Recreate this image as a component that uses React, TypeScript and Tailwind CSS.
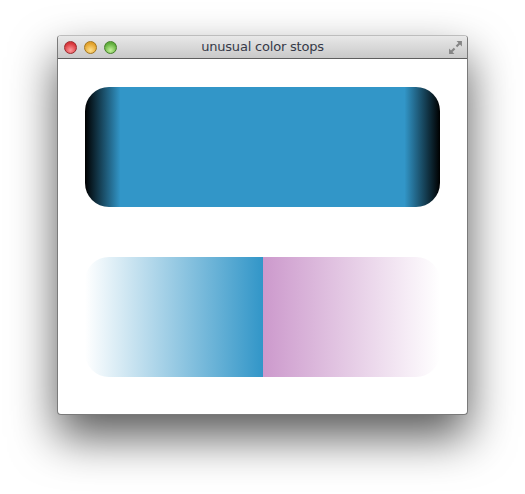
import React from 'react';

const TrafficLight = ({ from, to, ring }: { from: string; to: string; ring: string }) => (
  <span
    className={`block h-[13px] w-[13px] rounded-full border ${ring}`}
    style={{ background: `radial-gradient(circle at 50% 75%, ${to} 0%, ${from} 70%)` }}
  />
);

const ResizeIcon = () => (
  <svg width="15" height="15" viewBox="0 0 14 14" fill="#858585">
    <path d="M8 1 H13 V6 L11.2 4.2 L8.6 6.8 L7.2 5.4 L9.8 2.8 Z" />
    <path d="M6 13 H1 V8 L2.8 9.8 L5.4 7.2 L6.8 8.6 L4.2 11.2 Z" />
  </svg>
);

export default function App() {
  return (
    <div className="w-[525px] h-[494px] bg-white pt-[35px] pl-[57px] overflow-hidden">
      <div className="w-[411px] h-[380px] flex flex-col rounded-[4px] border border-[#7a7a7a] border-t-[#bdbdbd] bg-white shadow-[0_22px_46px_rgba(0,0,0,0.65)] overflow-hidden">
        {/* title bar */}
        <div className="relative h-[23px] shrink-0 flex items-center bg-gradient-to-b from-[#e8e8e8] to-[#c9c9c9] border-b border-[#5e5e5e]">
          <div className="flex items-center gap-[7px] pl-[6px]">
            <TrafficLight from="#d8363b" to="#ff9a9c" ring="border-[#9a2a2d]" />
            <TrafficLight from="#e2a12b" to="#ffe08a" ring="border-[#a3761e]" />
            <TrafficLight from="#5fae3b" to="#c4f29a" ring="border-[#467f2a]" />
          </div>
          <div className="absolute inset-0 flex items-center justify-center text-[13px] text-[#363a48] font-['Lucida_Grande','DejaVu_Sans',sans-serif] tracking-[-0.2px]">
            unusual color stops
          </div>
          <div className="ml-auto pr-[4px]">
            <ResizeIcon />
          </div>
        </div>
        {/* content */}
        <div className="flex flex-col gap-[50px] pt-[28px] pl-[27px]">
          <div className="w-[355px] h-[120px] rounded-[24px] bg-[linear-gradient(to_right,#000000,#3296c8_10%,#3296c8_90%,#000000)]" />
          <div className="w-[355px] h-[120px] rounded-[24px] bg-[linear-gradient(to_right,#ffffff,#3296c8_50%,#cc99cc_50%,#ffffff)]" />
        </div>
      </div>
    </div>
  );
}
